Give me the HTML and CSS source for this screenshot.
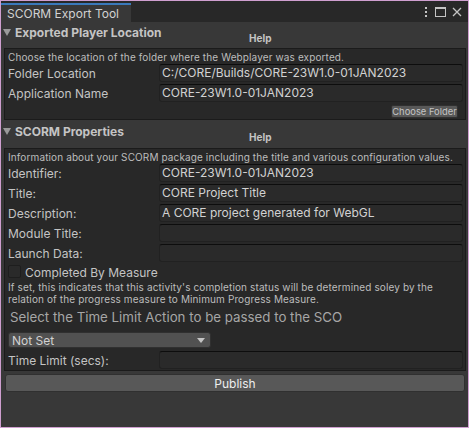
FILE: index.html
```html
<!DOCTYPE html>
<html>
<head>
<meta charset="utf-8">
<link rel="stylesheet" href="styles.css">
</head>
<body>
<div class="window">
  <div class="titlebar">
    <div class="tab">SCORM Export Tool</div>
    <div class="win-icons">
      <svg class="ico" width="6" height="12" viewBox="0 0 6 12"><rect x="2" y="1" width="2" height="2" fill="#c4c4c4"/><rect x="2" y="5" width="2" height="2" fill="#c4c4c4"/><rect x="2" y="9" width="2" height="2" fill="#c4c4c4"/></svg>
      <svg class="ico" width="11" height="12" viewBox="0 0 11 12"><rect x="0.5" y="1.5" width="10" height="9" fill="none" stroke="#c4c4c4" stroke-width="1"/><rect x="0" y="1" width="11" height="2" fill="#c4c4c4"/></svg>
      <svg class="ico" width="10" height="12" viewBox="0 0 10 12"><path d="M1 2 L9 10 M9 2 L1 10" stroke="#c4c4c4" stroke-width="1.3" fill="none"/></svg>
    </div>
  </div>
  <div class="panel">
    <section class="section">
      <div class="sec-head">
        <div class="sec-title"><svg class="tri" width="8" height="7" viewBox="0 0 8 7"><path d="M0 0 H8 L4 7 Z" fill="#9a9a9a"/></svg>Exported Player Location</div>
        <div class="help">Help</div>
      </div>
      <div class="box">
        <p class="mini">Choose the location of the folder where the Webplayer was exported.</p>
        <div class="field"><span class="label">Folder Location</span><div class="input">C:/CORE/Builds/CORE-23W1.0-01JAN2023</div></div>
        <div class="field"><span class="label">Application Name</span><div class="input">CORE-23W1.0-01JAN2023</div></div>
        <div class="btn-row"><button class="mini-btn">Choose Folder</button></div>
      </div>
    </section>
    <section class="section second">
      <div class="sec-head">
        <div class="sec-title"><svg class="tri" width="8" height="7" viewBox="0 0 8 7"><path d="M0 0 H8 L4 7 Z" fill="#9a9a9a"/></svg>SCORM Properties</div>
        <div class="help">Help</div>
      </div>
      <div class="box">
        <p class="mini">Information about your SCORM package including the title and various configuration values.</p>
        <div class="field"><span class="label">Identifier:</span><div class="input">CORE-23W1.0-01JAN2023</div></div>
        <div class="field"><span class="label">Title:</span><div class="input">CORE Project Title</div></div>
        <div class="field"><span class="label">Description:</span><div class="input">A CORE project generated for WebGL</div></div>
        <div class="field"><span class="label">Module Title:</span><div class="input"></div></div>
        <div class="field"><span class="label">Launch Data:</span><div class="input"></div></div>
        <div class="check-row"><span class="checkbox"></span><span class="check-label">Completed By Measure</span></div>
        <p class="mini note">If set, this indicates that this activity's completion status will be determined soley by the relation of the progress measure to Minimum Progress Measure.</p>
        <p class="big">Select the Time Limit Action to be passed to the SCO</p>
        <div class="dropdown"><span>Not Set</span><svg width="8" height="5" viewBox="0 0 8 5"><path d="M0 0 H8 L4 5 Z" fill="#c4c4c4"/></svg></div>
        <div class="field last"><span class="label">Time Limit (secs):</span><div class="input"></div></div>
      </div>
    </section>
    <button class="publish">Publish</button>
  </div>
</div>
</body>
</html>
```

FILE: styles.css
```css
* { box-sizing: border-box; }
html, body { margin: 0; padding: 0; background: #cf9fd0; }
body { font-family: Inter, "Noto Sans", sans-serif; color: #c4c4c4; }

.window {
  width: 469px;
  height: 428px;
  border: 1px solid #cf9fd0;
  background: #383838;
  display: flex;
  flex-direction: column;
  overflow: hidden;
}

.titlebar {
  height: 21px;
  flex: none;
  background: #282828;
  display: flex;
  align-items: flex-end;
  justify-content: space-between;
}
.tab {
  width: 130px;
  height: 19px;
  background: #383838;
  border-top: 2px solid #3a79bb;
  font-size: 12px;
  line-height: 17px;
  padding-left: 6px;
  color: #d2d2d2;
}
.win-icons {
  align-self: center;
  display: flex;
  align-items: center;
  gap: 6px;
  padding-right: 6px;
  margin-top: 1px;
}
.win-icons .ico { display: block; }

.panel {
  flex: 1;
  padding: 0 2px 0 3px;
  display: flex;
  flex-direction: column;
}

.section { display: flex; flex-direction: column; }
.sec-head {
  height: 26px;
  flex: none;
  display: grid;
  grid-template-columns: 245px auto;
}
.second .sec-head { margin-top: 1px; height: 27px; }
.sec-title {
  display: flex;
  align-items: center;
  height: 20px;
  font-size: 12px;
  font-weight: 700;
  color: #c4c4c4;
}
.tri { margin: 0 4px 0 -1px; }
.help {
  margin-top: 10px;
  font-size: 10px;
  line-height: 12px;
  font-weight: 700;
  color: #c4c4c4;
}

.box {
  background: #282828;
  border: 1px solid #1b1b1b;
  padding: 2px 2px 1px 3px;
  display: flex;
  flex-direction: column;
}
.mini {
  margin: 0 0 1px;
  font-size: 10px;
  letter-spacing: 0.12px;
  line-height: 12px;
  color: #bdbdbd;
}
.field {
  display: grid;
  grid-template-columns: 151px 1fr;
  align-items: center;
  height: 18px;
  flex: none;
  margin: 0 0 2px;
}
.label {
  font-size: 12px;
  color: #c4c4c4;
}
.input {
  height: 18px;
  background: #2a2a2a;
  border: 1px solid #212121;
  border-top-color: #0d0d0d;
  border-radius: 3px;
  font-size: 12px;
  line-height: 16px;
  padding-left: 2px;
  color: #d2d2d2;
  white-space: nowrap;
}
.btn-row {
  display: flex;
  justify-content: flex-end;
  padding-right: 5px;
  margin-top: 1px;
}
.mini-btn {
  height: 13px;
  width: 67px;
  padding: 0;
  background: #585858;
  border: 1px solid #303030;
  border-radius: 2px;
  font-family: Inter, "Noto Sans", sans-serif;
  font-size: 9.4px;
  line-height: 11px;
  white-space: nowrap;
  overflow: visible;
  color: #c4c4c4;
}

.check-row {
  height: 17px;
  flex: none;
  display: flex;
  align-items: flex-start;
}
.checkbox {
  width: 13px;
  height: 13px;
  margin-top: 1px;
  background: #2a2a2a;
  border: 1px solid #1e1e1e;
  border-radius: 2px;
}
.check-label {
  margin-left: 4px;
  font-size: 12px;
  line-height: 17px;
}
.note { margin: 0; }
.big {
  margin: 2px 0 0 2px;
  font-size: 13.3px;
  line-height: 20px;
  color: #a6a6a6;
}
.dropdown {
  margin-top: 5px;
  width: 203px;
  height: 16px;
  flex: none;
  background: #515151;
  border: 1px solid #303030;
  border-radius: 3px;
  display: flex;
  align-items: center;
  justify-content: space-between;
  padding: 0 5px 0 3px;
  font-size: 12px;
  color: #d2d2d2;
}
.field.last { margin: 3px 0 0; }

.publish {
  margin: 3px 1px 0 1px;
  height: 18px;
  flex: none;
  background: #585858;
  border: 1px solid #303030;
  border-radius: 3px;
  font-family: Inter, "Noto Sans", sans-serif;
  font-size: 12px;
  color: #eeeeee;
  padding: 0;
}
```
